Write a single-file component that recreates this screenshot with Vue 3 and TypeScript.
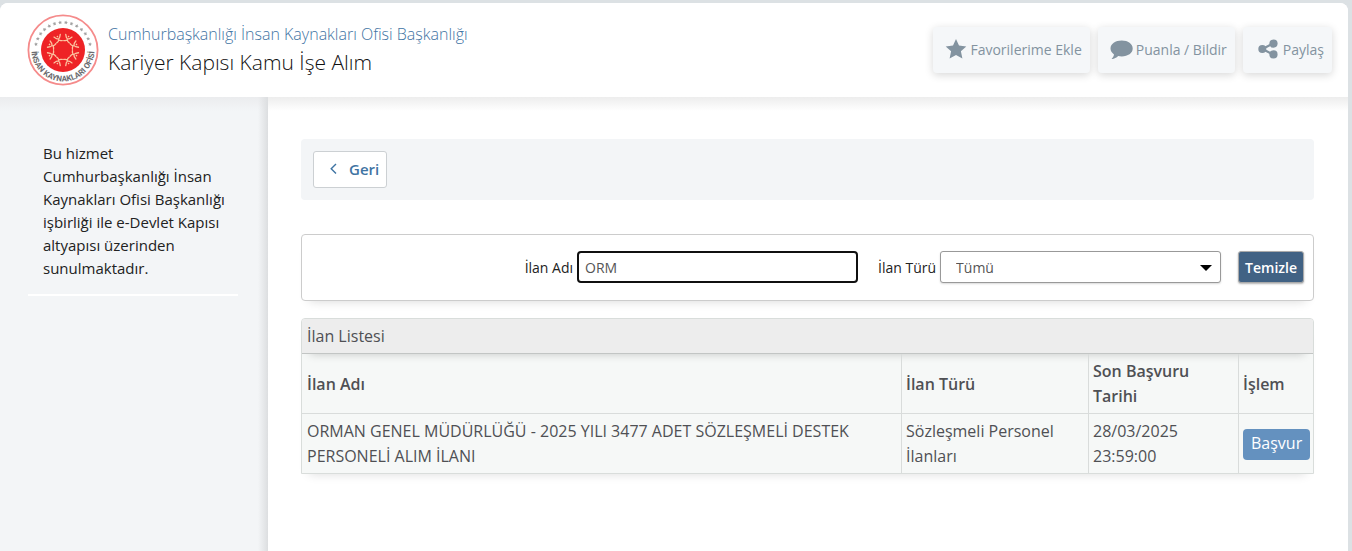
<script setup lang="ts">
import { ref, computed } from 'vue'

interface Listing {
  title: string
  type: string
  date: string
  time: string
}

const types = ['Tümü', 'Sözleşmeli Personel İlanları']
const query = ref('ORM')
const selectedType = ref('Tümü')

const listings: Listing[] = [
  {
    title: 'ORMAN GENEL MÜDÜRLÜĞÜ - 2025 YILI 3477 ADET SÖZLEŞMELİ DESTEK PERSONELİ ALIM İLANI',
    type: 'Sözleşmeli Personel İlanları',
    date: '28/03/2025',
    time: '23:59:00',
  },
]

const visibleListings = computed(() =>
  listings.filter(
    (l) =>
      l.title.includes(query.value.toLocaleUpperCase('tr')) &&
      (selectedType.value === 'Tümü' || l.type === selectedType.value),
  ),
)

const figureAngles = Array.from({ length: 8 }, (_, i) => i * 45 + 22.5)
const starAngles = Array.from({ length: 14 }, (_, i) => -78 + i * 12)

function clearFilters() {
  query.value = ''
  selectedType.value = 'Tümü'
}
</script>

<template>
  <div class="page">
    <header class="header">
      <svg class="logo" viewBox="0 0 72 72" aria-hidden="true">
        <defs>
          <path id="seal-arc" d="M4.9 31 A31.5 31.5 0 1 0 67.1 31" />
        </defs>
        <circle cx="36" cy="36" r="34.6" fill="#fff" stroke="#f58b8b" stroke-width="1.8" />
        <circle cx="36" cy="36" r="22" fill="#ee2326" />
        <g fill="#a2a2a2">
          <path
            v-for="a in starAngles"
            :key="a"
            d="M36 6.4 l.6 1.2 1.3.2 -.9.9 .2 1.3 -1.2-.6 -1.2.6 .2-1.3 -.9-.9 1.3-.2z"
            :transform="`rotate(${a} 36 36)`"
          />
        </g>
        <g fill="none" stroke="#fcc3a0" stroke-width="1.3" stroke-linecap="round">
          <g v-for="a in figureAngles" :key="a" :transform="`rotate(${a} 36 36)`">
            <path d="M32.6 20.6 L34.2 23 L36 24.2 L37.8 23 L39.4 20.6 M36 24.2 L36 25.2 M33 27 L34.6 26.4 L36 25.2 L37.4 26.4 L39 27" />
            <circle cx="36" cy="21.4" r=".8" fill="#fcc3a0" stroke="none" />
          </g>
        </g>
        <text class="seal-text"><textPath href="#seal-arc" startOffset="50%" text-anchor="middle">İNSAN KAYNAKLARI OFİSİ</textPath></text>
      </svg>
      <div class="titles">
        <a class="org" href="#">Cumhurbaşkanlığı İnsan Kaynakları Ofisi Başkanlığı</a>
        <h1>Kariyer Kapısı Kamu İşe Alım</h1>
      </div>
      <div class="actions">
        <button type="button" class="action">
          <svg width="22" height="20" viewBox="0 0 22 20" aria-hidden="true">
            <path d="M11 0 L14 6.6 L21.3 7.4 L15.9 12.3 L17.4 19.5 L11 15.9 L4.6 19.5 L6.1 12.3 L.7 7.4 L8 6.6Z" />
          </svg>
          <span>Favorilerime Ekle</span>
        </button>
        <button type="button" class="action">
          <svg width="23" height="20" viewBox="0 0 23 20" aria-hidden="true">
            <path d="M11.7 1.5 C18 1.5 22.7 5 22.7 9.5 S18 17.4 11.7 17.4 C10.4 17.4 9.3 17.3 8.2 17 C6.4 18.8 4.4 19.8 2 20 C1.6 19.8 1.7 19.5 2 19.2 C3.2 18 3.8 16.9 4 15.4 C1.8 13.8 .5 11.8 .5 9.5 C.5 5 5.4 1.5 11.7 1.5Z" />
          </svg>
          <span>Puanla / Bildir</span>
        </button>
        <button type="button" class="action share">
          <svg width="20" height="20" viewBox="0 0 20 20" aria-hidden="true">
            <path d="M15.5 4.3 L4.5 10 L15.5 15.7" fill="none" stroke="#8393a0" stroke-width="2.2" />
            <circle cx="4.3" cy="10" r="4" />
            <circle cx="15.5" cy="4.6" r="4.1" />
            <circle cx="15.5" cy="15.4" r="4.1" />
          </svg>
          <span>Paylaş</span>
        </button>
      </div>
    </header>

    <div class="body">
      <aside class="sidebar">
        <p>Bu hizmet Cumhurbaşkanlığı İnsan Kaynakları Ofisi Başkanlığı işbirliği ile e-Devlet Kapısı altyapısı üzerinden sunulmaktadır.</p>
      </aside>

      <main class="content">
        <nav class="toolbar">
          <button type="button" class="back">
            <svg width="7" height="12" viewBox="0 0 7 12" aria-hidden="true">
              <path d="M6 1 L1.2 5.7 L6 10.4" fill="none" stroke="#3f74a3" stroke-width="1.4" />
            </svg>
            <span>Geri</span>
          </button>
        </nav>

        <form class="filters" @submit.prevent>
          <div class="field">
            <label for="listing-name">İlan Adı</label>
            <input id="listing-name" v-model="query" type="text" class="name-input" />
          </div>
          <div class="field">
            <label for="listing-type">İlan Türü</label>
            <div class="select-wrap">
              <select id="listing-type" v-model="selectedType">
                <option v-for="t in types" :key="t" :value="t">{{ t }}</option>
              </select>
              <svg class="caret" width="12" height="6" viewBox="0 0 12 6" aria-hidden="true">
                <path d="M0 0 H12 L6 6Z" />
              </svg>
            </div>
          </div>
          <button type="button" class="clear" @click="clearFilters">Temizle</button>
        </form>

        <section class="panel">
          <h2>İlan Listesi</h2>
          <table>
            <colgroup>
              <col />
              <col class="col-type" />
              <col class="col-date" />
              <col class="col-action" />
            </colgroup>
            <thead>
              <tr>
                <th scope="col">İlan Adı</th>
                <th scope="col">İlan Türü</th>
                <th scope="col">Son Başvuru Tarihi</th>
                <th scope="col">İşlem</th>
              </tr>
            </thead>
            <tbody>
              <tr v-for="l in visibleListings" :key="l.title">
                <td>{{ l.title }}</td>
                <td>{{ l.type }}</td>
                <td>{{ l.date }} {{ l.time }}</td>
                <td><button type="button" class="apply">Başvur</button></td>
              </tr>
            </tbody>
          </table>
        </section>
      </main>
    </div>
  </div>
</template>

<style>
body {
  background: #dce1e4;
}
</style>

<style scoped>
* {
  box-sizing: border-box;
}
.page {
  display: flex;
  flex-direction: column;
  min-height: calc(100vh - 3px);
  margin: 3px 4px 0 0;
  background: #fff;
  border-radius: 8px 8px 0 0;
  overflow: hidden;
  font-family: "Open Sans", "Noto Sans", sans-serif;
  font-size: 14px;
  color: #222;
}
button,
input,
select {
  font-family: inherit;
  margin: 0;
}
.header {
  display: flex;
  align-items: center;
  height: 94px;
  padding: 0 16px 0 27px;
  background: #fff;
}
.logo {
  width: 72px;
  height: 72px;
  flex: none;
}
.seal-text {
  font-family: "Liberation Sans Narrow", Roboto, sans-serif;
  font-size: 8px;
  font-weight: 700;
  fill: #6c6c70;
}
.titles {
  flex: 1;
  padding-left: 9px;
}
.org {
  display: block;
  font-size: 16px;
  line-height: 24px;
  font-weight: 300;
  color: #3f74a3;
  text-decoration: none;
}
h1 {
  margin: 0;
  font-size: 21px;
  line-height: 32px;
  font-weight: 300;
  color: #111;
}
.actions {
  display: flex;
  gap: 8px;
}
.action {
  display: flex;
  align-items: center;
  gap: 3px;
  height: 46px;
  padding: 0 8px 2px 12px;
  border: 0;
  border-radius: 4px;
  background: #f5f7f9;
  box-shadow: 0 2px 8px rgba(0, 0, 0, 0.16);
  color: #8393a0;
  font-size: 14px;
}
.action.share {
  gap: 5px;
  padding-left: 15px;
}
.action svg {
  fill: #8393a0;
}
.body {
  flex: 1;
  display: flex;
  background: linear-gradient(#ededed, rgba(255, 255, 255, 0) 14px);
}
.sidebar {
  flex: none;
  width: 268px;
  padding: 45px 30px 0 28px;
  background:
    linear-gradient(to left, #dcdee0, rgba(243, 245, 247, 0) 10px),
    linear-gradient(#ebecee, #f3f5f7 14px);
}
.sidebar p {
  margin: 0;
  padding: 0 9px 14px 15px;
  border-bottom: 2px solid #fff;
  font-size: 15px;
  line-height: 23px;
}
.content {
  flex: 1;
  min-width: 0;
  padding: 42px 34px 40px 33px;
}
.toolbar {
  padding: 12px;
  margin-bottom: 34px;
  background: #f3f5f7;
  border-radius: 4px;
}
.back {
  display: flex;
  align-items: center;
  gap: 12px;
  height: 37px;
  padding: 0 7px 2px 16px;
  border: 1px solid #ccd0d3;
  border-radius: 3px;
  background: #fff;
  color: #3f74a3;
  font-size: 15px;
  font-weight: 600;
}
.filters {
  display: flex;
  align-items: center;
  justify-content: flex-end;
  gap: 20px;
  padding: 16px 9px 17px;
  margin-bottom: 17px;
  border: 1px solid #ccc;
  border-radius: 4px;
  background: #fff;
  box-shadow: 0 8px 10px -8px rgba(0, 0, 0, 0.16);
}
.field {
  display: flex;
  align-items: center;
  gap: 4px;
}
.name-input {
  width: 281px;
  height: 32px;
  padding: 0 6px;
  border: 2px solid #101010;
  border-radius: 4px;
  outline: none;
  background: #fff;
  color: #555;
  font-size: 14px;
}
.select-wrap {
  position: relative;
}
select {
  display: block;
  appearance: none;
  width: 281px;
  height: 32px;
  padding: 0 28px 0 15px;
  border: 1px solid #999;
  border-radius: 3px;
  background: #fff;
  box-shadow: 0 1px 2px rgba(0, 0, 0, 0.15);
  color: #555;
  font-size: 14px;
}
.caret {
  position: absolute;
  right: 9px;
  top: 14px;
  pointer-events: none;
}
.clear {
  height: 32px;
  padding: 0 6px;
  margin-left: -3px;
  border: 1px solid #aaa;
  border-radius: 3px;
  background: #416284;
  box-shadow: 0 1px 2px rgba(0, 0, 0, 0.3);
  color: #fff;
  font-size: 14px;
  font-weight: 600;
}
.panel {
  border: 1px solid #d9dddb;
  border-radius: 4px 4px 0 0;
  background: #f6f8f7;
  box-shadow: 0 8px 10px -8px rgba(0, 0, 0, 0.14);
  color: #4f5054;
  font-size: 16px;
  line-height: 25px;
}
h2 {
  margin: 0;
  padding: 5px 5px 4px;
  border-bottom: 1px solid #c2c5c4;
  border-radius: 3px 3px 0 0;
  background: #ededed;
  box-shadow: 0 8px 10px -8px rgba(0, 0, 0, 0.2);
  font-size: 16px;
  font-weight: 400;
}
table {
  width: 100%;
  table-layout: fixed;
  border-spacing: 0;
}
.col-type {
  width: 187px;
}
.col-date {
  width: 150px;
}
.col-action {
  width: 75px;
}
th,
td {
  padding: 5px 4px 4px;
  border-left: 1px solid #d9dcdb;
  text-align: left;
  vertical-align: middle;
}
th:first-child,
td:first-child {
  padding-left: 5px;
  border-left: 0;
}
th {
  font-weight: 600;
}
td {
  border-top: 1px solid #d9dcdb;
}
.apply {
  display: block;
  height: 31px;
  padding: 0 8px 2px;
  border: 0;
  border-radius: 4px;
  background: #6491bf;
  color: #fff;
  font-size: 16px;
  font-weight: 500;
}
</style>
